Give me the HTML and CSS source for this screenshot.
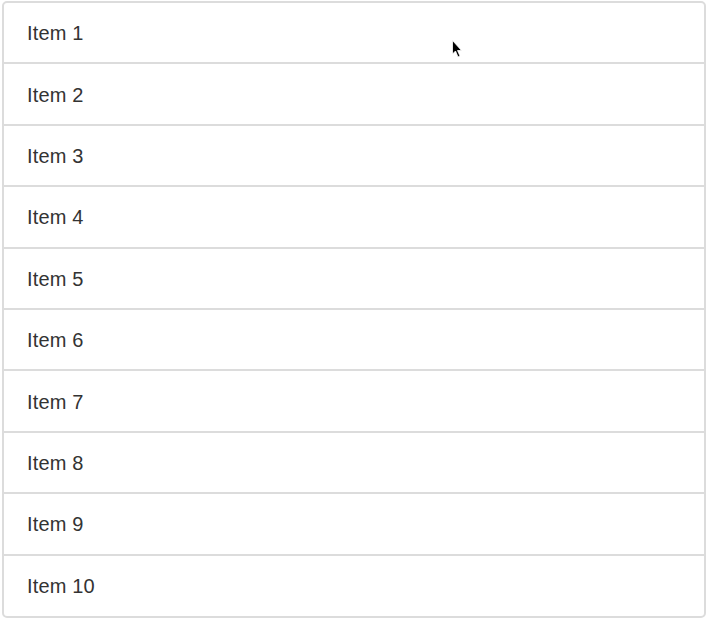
FILE: index.html
```html
<!DOCTYPE html>
<html>
<head>
<meta charset="utf-8">
<link rel="stylesheet" href="styles.css">
</head>
<body>
<ul class="list">
  <li class="item">Item 1</li>
  <li class="item">Item 2</li>
  <li class="item">Item 3</li>
  <li class="item">Item 4</li>
  <li class="item">Item 5</li>
  <li class="item">Item 6</li>
  <li class="item">Item 7</li>
  <li class="item">Item 8</li>
  <li class="item">Item 9</li>
  <li class="item">Item 10</li>
</ul>
<svg class="cursor" width="12" height="20" viewBox="0 0 12 20"><path d="M0.5 0.5 L0.5 14 L3.5 11 L6 17 L8 16 L5.5 10.5 L9.5 10.5 Z" fill="#000" stroke="#fff" stroke-width="0.8"/></svg>
</body>
</html>
```
FILE: styles.css
```css
html, body {
  margin: 0;
  padding: 0;
  background: #fff;
}
body {
  padding: 1px 2px 0 2px;
  font-family: "Liberation Sans", Arial, sans-serif;
}
.list {
  list-style: none;
  margin: 0;
  padding: 0;
  width: 704px;
  box-sizing: border-box;
  border: 2px solid #dcdcdc;
  border-radius: 5px;
  overflow: hidden;
}
.item {
  box-sizing: border-box;
  height: 61.4px;
  display: flex;
  align-items: center;
  padding: 2px 23px 0 23px;
  font-size: 20px;
  letter-spacing: 0.15px;
  color: #333;
  border-bottom: 2px solid #dcdcdc;
}
.item:last-child {
  border-bottom: none;
  height: 60px;
}
.cursor {
  position: absolute;
  left: 452px;
  top: 40px;
}
```
